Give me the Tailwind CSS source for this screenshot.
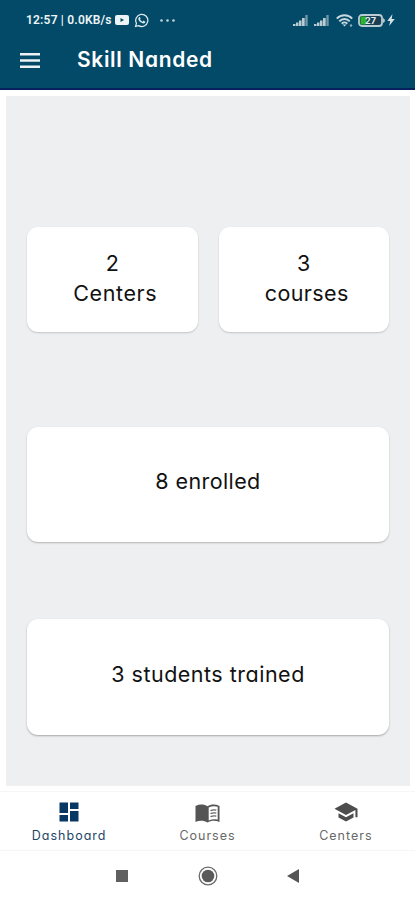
<!DOCTYPE html>
<html lang="en">
  <head>
    <meta charset="UTF-8" />
    <meta name="viewport" content="width=device-width, initial-scale=1.0" />
    <script src="https://cdn.jsdelivr.net/npm/@tailwindcss/browser@4"></script>
    <title>Skill Nanded</title>
  </head>
  <body
    class="h-[900px] overflow-hidden bg-white flex flex-col font-['Inter',sans-serif] [font-feature-settings:'cv11']"
  >
    <header class="h-[90px] shrink-0 bg-[#034a69] border-b-2 border-[#06215c] text-white">
      <!-- status bar -->
      <div class="h-10 pl-[26px] pr-[20px] flex items-center justify-between">
        <div class="flex items-center">
          <span
            class="w-[87px] text-[12px] leading-none font-semibold font-['Roboto',sans-serif] whitespace-nowrap tracking-[0.2px] text-[#edf4f6]"
            >12:57 | 0.0KB/s</span
          >
          <svg class="w-[14px] h-[10px] ml-[2px]" viewBox="0 0 14 10">
            <rect width="14" height="10" rx="2" fill="#edf4f6" />
            <path d="M5.500 3v4l3.500-2z" fill="#034a69" />
          </svg>
          <svg class="w-[15px] h-[15px] ml-[5px]" viewBox="0 0 24 24" fill="none" stroke="#dce9ee">
            <path stroke-width="2" d="M2.500 21.500l1.400-5A9.700 9.700 0 1 1 7.400 20.200z" />
            <path
              fill="#dce9ee"
              stroke="none"
              d="M8.300 6.800c.6-.6 1.300-.3 1.500.3l.7 1.700c.1.500-.5 1.100-.8 1.500 1 1.800 2.200 2.800 4 3.600l1.200-1.400c.3-.3.6-.2.9 0l1.800.9c.7.400.3 1.900-.4 2.600-1.600 1.400-4.200.6-6.600-1.200-2.100-1.600-4.300-4.500-3.600-6.500.2-.6.700-1.100 1.300-1.500z"
            />
          </svg>
          <svg class="w-[15px] h-[3px] ml-[11px]" viewBox="0 0 15 3" fill="#c3d5dc">
            <circle cx="1.500" cy="1.500" r="1.300" />
            <circle cx="7.500" cy="1.500" r="1.300" />
            <circle cx="13.500" cy="1.500" r="1.300" />
          </svg>
        </div>
        <div class="flex items-center">
          <svg class="w-[15px] h-[11px]" viewBox="0 0 15 11" fill="#b9cbd3">
            <path d="M0 9h2.500v2H0zM3 7.500h2.500V11H3zM6 5.500h2.500V11H6zM9 3h2.700v8H9z" />
            <path d="M12.300 0h2.400v11h-2.400z" fill="#6f95a6" />
          </svg>
          <svg class="w-[15px] h-[11px] ml-[6px]" viewBox="0 0 15 11" fill="#b9cbd3">
            <path d="M0 9h2.500v2H0zM3 7.500h2.500V11H3zM6 5.500h2.500V11H6zM9 3h2.700v8H9z" />
            <path d="M12.300 0h2.400v11h-2.400z" fill="#6f95a6" />
          </svg>
          <svg class="w-[17px] h-[13px] ml-[7px]" viewBox="0 0 17 13" fill="none" stroke="#c8d8de">
            <path stroke-width="1.900" d="M.8 4.600a10.500 10.500 0 0 1 15.400 0M3.300 7.300a7 7 0 0 1 10.400 0M5.700 9.700a4 4 0 0 1 5.600 0" />
            <path d="M8.500 12.600l-1.900-2.200h3.800z" fill="#c8d8de" stroke="none" />
            <circle cx="15" cy="11.500" r="1.200" fill="#8faebb" stroke="none" />
          </svg>
          <div class="relative ml-[5px]">
            <svg class="w-[27px] h-[13px]" viewBox="0 0 27 13">
              <rect x="1" y="1" width="23" height="11" rx="3" fill="#173e55" stroke="#b9ccd3" stroke-width="1.800" />
              <rect x="2.500" y="2.500" width="6" height="8" rx="1" fill="#2fb32c" />
              <path d="M25 4q2 1 2 2.500T25 9z" fill="#b9ccd3" />
            </svg>
            <span
              class="absolute inset-y-0 left-0 w-[25px] text-center text-[9px] leading-[13px] font-bold text-[#e3edf0]"
              >27</span
            >
          </div>
          <svg class="w-[8px] h-[12px] ml-[2px]" viewBox="0 0 8 12">
            <path d="M5.500 0L.3 6.900h2.900L2.200 12l5.500-7.100H4.600z" fill="#d5e1e5" />
          </svg>
        </div>
      </div>
      <!-- title bar -->
      <div class="h-[38px] pl-5 flex items-center">
        <svg class="w-[20px] h-[15px] mt-[3px]" viewBox="0 0 20 15" fill="#edf3f5">
          <path d="M0 0h20v2.500H0zM0 6.200h20v2.500H0zM0 12.400h20v2.500H0z" />
        </svg>
        <h1 class="ml-[37px] text-[21px] leading-none font-semibold tracking-[0.65px]">
          Skill Nanded
        </h1>
      </div>
    </header>

    <main
      class="h-[690px] shrink-0 mt-[6px] ml-[6px] mr-[5px] bg-[#edeff1] pt-[131px] pl-[21px] pr-[21px] text-[21.5px] leading-[30px] text-[#111111]"
    >
      <div class="grid grid-cols-2 gap-[21px]">
        <div
          class="h-[105px] rounded-[11px] bg-white shadow-[0_1px_2px_rgba(0,0,0,0.18)] pt-[21px] pl-[6px] text-center"
        >
          <p class="-ml-[6px]">2</p>
          <p class="tracking-[0.6px]">Centers</p>
        </div>
        <div
          class="h-[105px] rounded-[11px] bg-white shadow-[0_1px_2px_rgba(0,0,0,0.18)] pt-[21px] pl-[6px] text-center"
        >
          <p class="-ml-[6px]">3</p>
          <p class="tracking-[0.4px]">courses</p>
        </div>
      </div>
      <div
        class="mt-[95px] h-[115px] rounded-[11px] bg-white shadow-[0_1px_2px_rgba(0,0,0,0.25)] pt-[39px] text-center tracking-[0.4px]"
      >
        8 enrolled
      </div>
      <div
        class="mt-[77px] h-[116px] rounded-[11px] bg-white shadow-[0_1px_2px_rgba(0,0,0,0.3)] pt-[40px] text-center tracking-[0.5px]"
      >
        3 students trained
      </div>
    </main>

    <nav
      class="mt-[5px] h-[60px] shrink-0 border-y border-[#f6f6f6] grid grid-cols-3 text-[12.5px] leading-none tracking-[1px] text-[#686868]"
    >
      <a class="flex flex-col items-center pt-[10px] text-[#1d4668]">
        <svg class="w-[20px] h-[20px]" viewBox="0 0 20 20" fill="#073763">
          <path d="M.5.5h8.500v10.500H.5zM.5 13H9v6.500H.5zM11 .5h8.500V7H11zM11 9h8.500v10.500H11z" />
        </svg>
        <span class="mt-[8px]">Dashboard</span>
      </a>
      <a class="flex flex-col items-center pt-[11px]">
        <svg class="w-[25px] h-[20px]" viewBox="0 0 25 20">
          <path
            d="M.5 3C4.500 1 9 1 12.500 3.200 16 1 20.500 1 24.500 3v16c-4-1.700-8.500-1.500-12 .5-3.500-2-8-2.200-12-.5z"
            fill="#555555"
          />
          <path d="M13.700 4.600c2.700-1.500 6-1.800 9-.8v12.900c-3-.7-6.300-.4-9 .9z" fill="#ffffff" />
          <path
            d="M15.500 7.700c1.800-.8 3.800-1 5.800-.6M15.500 10.700c1.800-.8 3.800-1 5.800-.6M15.500 13.700c1.800-.8 3.800-1 5.800-.6"
            fill="none"
            stroke="#666666"
            stroke-width="1.400"
          />
        </svg>
        <span class="mt-[7px]">Courses</span>
      </a>
      <a class="flex flex-col items-center pt-[10px]">
        <svg class="w-[24px] h-[20px]" viewBox="0 0 24 20" fill="#4d4d4d">
          <path d="M12 .5L.5 6.800 12 13l9.400-5.100v7.300h2.100V6.800z" />
          <path d="M4.500 11.200v4.200L12 19.500l7.500-4.100v-4.200L12 15.300z" />
        </svg>
        <span class="mt-[8px]">Centers</span>
      </a>
    </nav>

    <!-- system buttons -->
    <div class="h-[49px] flex items-center pl-[116px]">
      <svg class="w-[12px] h-[12px]" viewBox="0 0 12 12"><rect width="12" height="12" fill="#606060" /></svg>
      <svg class="w-[20px] h-[20px] ml-[70px]" viewBox="0 0 20 20">
        <circle cx="10" cy="10" r="8.800" fill="none" stroke="#6a6a6a" stroke-width="1.300" />
        <circle cx="10" cy="10" r="6.300" fill="#5a5a5a" />
      </svg>
      <svg class="w-[12px] h-[14px] ml-[69px]" viewBox="0 0 12 14"><path d="M12 0v14L0 7z" fill="#555555" /></svg>
    </div>
  </body>
</html>
